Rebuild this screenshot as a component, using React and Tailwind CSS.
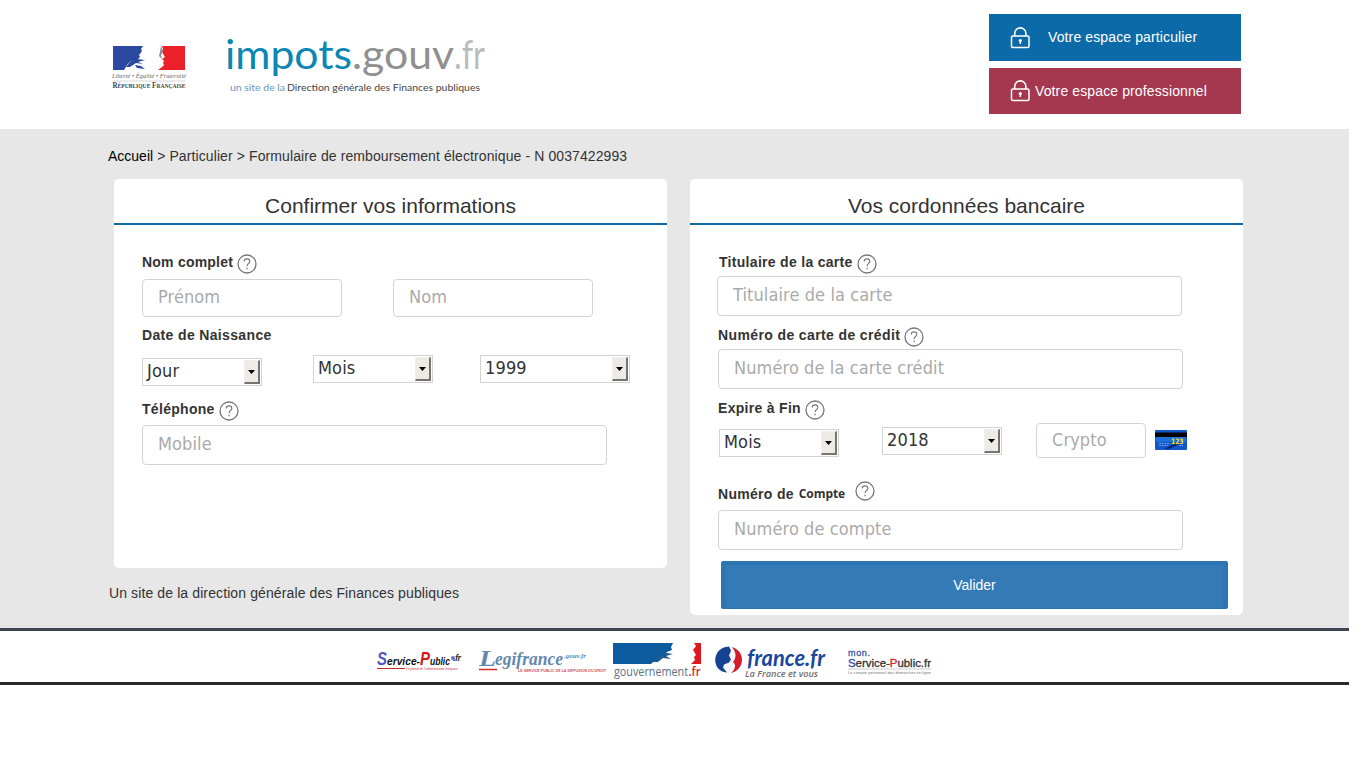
import React from "react";

function Help({ className = "" }) {
  return (
    <svg className={"h-5 w-5 shrink-0 " + className} viewBox="0 0 20 20" fill="none" stroke="#777">
      <circle cx="10" cy="10" r="9" strokeWidth="1.3" />
      <path d="M7.200 7.600C7.200 5.700 8.400 4.900 10 4.900s2.800 1 2.800 2.500c0 2.200-2.700 2.100-2.700 4.800" strokeWidth="1.100" />
      <path d="M10.100 13.700v1.500" strokeWidth="1.300" />
    </svg>
  );
}

function Label({ children, className = "" }) {
  return (
    <span className={"whitespace-nowrap leading-4 font-bold text-[#333] " + className}>
      {children}
    </span>
  );
}

function Field({ children, className = "" }) {
  return (
    <div
      className={
        "flex shrink-0 items-center rounded-[4px] border border-[#d3d3d3] bg-white pb-[3px] pl-[15px] font-['DejaVu_Sans_Condensed','DejaVu_Sans',sans-serif] text-[18px] tracking-[0.1px] text-[#aaa] " +
        className
      }
    >
      <span className="whitespace-nowrap">{children}</span>
    </div>
  );
}

function Picker({ children, className = "" }) {
  return (
    <div
      className={
        "flex h-7 shrink-0 items-center justify-between border border-[#d3d3d3] bg-white pr-px pl-1 font-['DejaVu_Sans_Condensed','DejaVu_Sans',sans-serif] text-[18px] tracking-[0.15px] text-[#333] " +
        className
      }
    >
      <span className="pb-0.5 leading-6">{children}</span>
      <span className="flex h-6 w-4 items-center justify-center border-t border-r-2 border-b-2 border-l border-t-[#f1efeb] border-r-[#77746f] border-b-[#77746f] border-l-[#f1efeb] bg-[#eeebe6]">
        <svg className="h-1 w-[7px]" viewBox="0 0 7 4">
          <path d="M0 0h7L3.500 4z" fill="#000" />
        </svg>
      </span>
    </div>
  );
}

function Lock() {
  return (
    <svg className="h-[22px] w-5" viewBox="0 0 20 22" fill="none" stroke="#fff">
      <rect x="1.500" y="9" width="17.500" height="11.500" rx="1.300" strokeWidth="1.500" />
      <path d="M4.700 9V6.500a5.600 5.600 0 0 1 11.200 0V9" strokeWidth="1.600" />
      <circle cx="10.300" cy="13.500" r="1.600" fill="#fff" stroke="none" />
      <path d="M10.300 14v3" strokeWidth="1.500" />
    </svg>
  );
}

function Republic() {
  return (
    <svg className="h-[46px] w-[76px]" viewBox="0 0 76 46">
      <path d="M2 1h72v24H2z" fill="#fff" />
      <path d="M2 1h30l-2 3 1 2-3 4 1 2-3 3-6 1-4 4-3 5H2z" fill="#2b4a9f" />
      <path d="M51 1h23v24H47l4-3 2-2-1-2 1-2-2-2 3-2-3-5 1-3z" fill="#ec2029" />
      <path d="M15 22l5-6 6-2 8 1-7 2 5 2-7-1-6 4zM24 20l6 1 4 3-8-1z" fill="#2b4a9f" />
      <path d="M50 1l2 5-2 4 1 4-3-3 1-4z" fill="#8a8a8a" />
      <text x="1" y="33" textLength="74" lengthAdjust="spacingAndGlyphs" fontFamily="Liberation Serif, serif" fontStyle="italic" fontSize="6.500" fill="#666">Liberté • Égalité • Fraternité</text>
      <path d="M2 36h72" stroke="#aaa" strokeWidth=".5" />
      <text x="1.500" y="43" textLength="73" lengthAdjust="spacingAndGlyphs" fontFamily="Liberation Serif, serif" fontWeight="bold" fontSize="7.500" fill="#444">
        R<tspan fontSize="6">ÉPUBLIQUE</tspan> F<tspan fontSize="6">RANÇAISE</tspan>
      </text>
    </svg>
  );
}

function Wordmark() {
  return (
    <svg className="h-[70px] w-[264px] overflow-visible" viewBox="0 0 264 70" fontFamily="Lato, sans-serif">
      <g fontSize="41">
        <text x="-1" y="42" textLength="127" lengthAdjust="spacingAndGlyphs" fill="#0a87b3">impots</text>
        <text x="126" y="42" textLength="102" lengthAdjust="spacingAndGlyphs" fill="#909090">.gouv</text>
        <text x="228" y="42" textLength="31" lengthAdjust="spacingAndGlyphs" fill="#bcbcbc">.fr</text>
      </g>
      <text x="4" y="64" textLength="55" lengthAdjust="spacingAndGlyphs" fontSize="10" fill="#6799bd">un site de la</text>
      <text x="61" y="64" textLength="193" lengthAdjust="spacingAndGlyphs" fontSize="10" fill="#454545">Direction générale des Finances publiques</text>
    </svg>
  );
}

function BankCard() {
  return (
    <svg className="h-5 w-8" viewBox="0 0 32 20">
      <rect width="32" height="20" rx="1" fill="#1257c8" />
      <path d="M1 7h30v5H1z" fill="#1b70da" />
      <path d="M0 2.500h32v4.500H0z" fill="#000" />
      <path d="M9 19l10-5 4-1 1 1-10 5z" fill="#08256f" />
      <path d="M4 13.500h11M4 15.500h9M24 15.500h4" stroke="#6c9be4" strokeDasharray="2 .6" />
      <text x="16" y="13.500" textLength="12.500" lengthAdjust="spacingAndGlyphs" fontFamily="DejaVu Sans, sans-serif" fontSize="7.500" fontWeight="bold" fill="#f0e010">123</text>
    </svg>
  );
}

function Partners() {
  return (
    <svg className="h-[51px] w-[580px]" viewBox="0 0 580 51" fontFamily="Liberation Sans, sans-serif">
      <g fontWeight="bold" fontStyle="italic">
        <text x="7" y="34" fontSize="18" textLength="10" lengthAdjust="spacingAndGlyphs" fill="#5358c4">S</text>
        <text x="17" y="34" fontSize="11.500" textLength="33" lengthAdjust="spacingAndGlyphs" fill="#111">ervice-</text>
        <text x="50" y="34" fontSize="18" textLength="10" lengthAdjust="spacingAndGlyphs" fill="#d8151d">P</text>
        <text x="60" y="34" fontSize="11.500" textLength="20" lengthAdjust="spacingAndGlyphs" fill="#111">ublic</text>
        <circle cx="83" cy="27" r="2" fill="#6874b7" />
        <text x="83" y="30" fontSize="9" textLength="8" fill="#333">.fr</text>
      </g>
      <path d="M7 37.500h28" stroke="#c8282d" />
      <text x="36" y="39" fontSize="4" textLength="52" lengthAdjust="spacingAndGlyphs" fontStyle="italic" fill="#c8282d">Le portail de l'administration française</text>

      <g fontFamily="Liberation Serif, serif" fontStyle="italic" fontWeight="bold" fill="#6389ae">
        <text x="109" y="35" fontSize="24" textLength="17" lengthAdjust="spacingAndGlyphs">L</text>
        <text x="125" y="34" fontSize="19" textLength="68" lengthAdjust="spacingAndGlyphs">egifrance</text>
        <text x="194" y="27" fontSize="7" textLength="22" lengthAdjust="spacingAndGlyphs">.gouv.fr</text>
      </g>
      <path d="M109 38.500h18" stroke="#d42b2b" strokeWidth="1.500" />
      <text x="148" y="41" fontSize="3.800" fontWeight="bold" textLength="88" lengthAdjust="spacingAndGlyphs" fill="#ce5260">LE SERVICE PUBLIC DE LA DIFFUSION DU DROIT</text>

      <path d="M243 12h87v21h-87z" fill="#0b5b9e" />
      <path d="M303 12h27v21h-49l5-5 7-2 4-5 5-2-1-3z" fill="#fff" />
      <path d="M324 12h7v21h-10l4-4-1-3 2-2-3-5 3-4z" fill="#df1820" />
      <path d="M282 31l7-7 8-2 6 1-7 2 5 3-8-1-5 4z" fill="#1b5b92" />
      <text x="244" y="45" fontFamily="Open Sans, sans-serif" fontSize="13" textLength="74" lengthAdjust="spacingAndGlyphs" fill="#597085">gouvernement</text>
      <text x="318.500" y="45" fontFamily="Open Sans, sans-serif" fontSize="13" fontWeight="600" textLength="12" lengthAdjust="spacingAndGlyphs" fill="#d51c25">.fr</text>

      <ellipse cx="358.500" cy="29" rx="13.500" ry="13" fill="#f3f5fa" />
      <path d="M359 15.500c-18 1-18 25-2 26l-4-5 1-3 5-2 2-3-2-4 2-5z" fill="#164294" />
      <path d="M362 16c14 4 13 23-1 26 5-4 5-9 2-11 4-5 3-10-1-15z" fill="#d41c29" />
      <g fontStyle="italic">
        <text x="377" y="35" fontFamily="Lato, sans-serif" fontSize="23" fontWeight="bold" textLength="78" lengthAdjust="spacingAndGlyphs" fill="#19489b">france.fr</text>
        <text x="375" y="46" fontFamily="Open Sans, sans-serif" fontSize="9" fontWeight="600" textLength="73" lengthAdjust="spacingAndGlyphs" fill="#707070">La France et vous</text>
      </g>

      <g strokeWidth=".3">
        <text x="478" y="25" fontSize="9" textLength="22" fill="#4058a8" stroke="#4058a8">mon.</text>
        <text x="478" y="35.500" fontSize="10.500" textLength="83" lengthAdjust="spacingAndGlyphs" fill="#333" stroke="#333">
          <tspan fill="#2445ad" stroke="#2445ad">S</tspan>ervice-<tspan fill="#dc2028" stroke="#dc2028">P</tspan>ublic.fr
        </text>
      </g>
      <path d="M478 38h83" stroke="#aaa" strokeWidth=".6" />
      <text x="478" y="43" fontSize="4" textLength="83" lengthAdjust="spacingAndGlyphs" fill="#777">Le compte personnel des démarches en ligne</text>
    </svg>
  );
}

function Panel({ title, className, children }) {
  return (
    <section className={"w-[553px] rounded-[5px] bg-white " + className}>
      <h2 className="h-[46px] border-b-2 border-[#0d6aa8] pt-[13px] text-center text-[21px] leading-7 text-[#333]">
        {title}
      </h2>
      {children}
    </section>
  );
}

export default function App() {
  return (
    <div className="h-[768px] w-[1366px] overflow-hidden bg-white font-['Liberation_Sans',Arial,sans-serif] text-[14px] text-[#333]">
      <div className="w-[1349px]">
        <header className="flex h-[129px] items-start pl-[111px]">
          <div className="pt-[45px]"><Republic /></div>
          <div className="pt-[27px] pl-[39px]"><Wordmark /></div>
          <div className="mt-[14px] ml-[499px] flex w-[252px] flex-col gap-[7px] text-[14px] text-white">
            <div className="flex h-[47px] items-center bg-[#0d6aa8] pl-[21px]">
              <Lock /><span className="ml-[18px] tracking-[0.12px]">Votre espace particulier</span>
            </div>
            <div className="flex h-[46px] items-center bg-[#a5384f] pl-[21px]">
              <Lock /><span className="ml-[5px] tracking-[0.12px]">Votre espace professionnel</span>
            </div>
          </div>
        </header>

        <main className="h-[499px] bg-[#e7e7e7]">
          <p className="h-[50px] pt-[19px] pl-[108px] leading-4 tracking-[0.1px]">
            <span className="tracking-normal text-black">Accueil</span> &gt; Particulier &gt; Formulaire de remboursement électronique - N 0037422993
          </p>
          <div className="flex items-start gap-[23px] pl-[114px]">
            <div className="w-[553px]">
              <Panel title="Confirmer vos informations" className="h-[389px]">
                <div className="px-7 pt-7">
                  <div className="flex h-[26px] items-start gap-1">
                    <Label className="pt-px tracking-[0.22px]">Nom complet</Label><Help className="mt-px" />
                  </div>
                  <div className="flex gap-[51px]">
                    <Field className="h-[38px] w-[200px]">Prénom</Field>
                    <Field className="h-[38px] w-[200px]">Nom</Field>
                  </div>
                  <div className="flex h-[38px] items-center pb-0.5">
                    <Label className="tracking-[0.35px]">Date de Naissance</Label>
                  </div>
                  <div className="flex h-[31px] items-start">
                    <Picker className="mt-[3px] w-[120px]">Jour</Picker>
                    <Picker className="ml-[51px] w-[120px]">Mois</Picker>
                    <Picker className="ml-[47px] w-[150px]">1999</Picker>
                  </div>
                  <div className="flex h-[39px] items-start gap-1 pt-[15px]">
                    <Label className="tracking-[0.3px]">Téléphone</Label><Help />
                  </div>
                  <Field className="h-10 w-[465px]">Mobile</Field>
                </div>
              </Panel>
              <p className="pt-[17px] leading-4 tracking-[0.11px]"><span className="-ml-[5px]">Un site de la direction générale des Finances publiques</span></p>
            </div>

            <Panel title="Vos cordonnées bancaire" className="h-[436px]">
              <div className="pt-7 pl-7">
                <div className="flex h-[23px] items-start gap-1">
                  <Label className="pt-px pl-px tracking-[0.3px]">Titulaire de la carte</Label><Help className="mt-px" />
                </div>
                <Field className="-ml-px h-10 w-[465px]">Titulaire de la carte</Field>
                <div className="flex h-[33px] items-start gap-1 pt-[11px]">
                  <Label className="tracking-[0.38px]">Numéro de carte de crédit</Label><Help />
                </div>
                <Field className="h-10 w-[465px]">Numéro de la carte crédit</Field>
                <div className="flex h-[34px] items-start gap-1 pt-[11px]">
                  <Label className="tracking-[0.3px]">Expire à Fin</Label><Help />
                </div>
                <div className="flex h-[58px] items-start">
                  <Picker className="mt-1.5 ml-px w-[120px]">Mois</Picker>
                  <Picker className="mt-1 ml-[43px] w-[120px]">2018</Picker>
                  <Field className="ml-[34px] h-[35px] w-[110px]">Crypto</Field>
                  <div className="mt-[7px] ml-[9px]"><BankCard /></div>
                </div>
                <div className="flex h-[29px] items-start">
                  <Label className="pt-[5px] tracking-[0.3px]">Numéro de</Label>
                  <Label className="ml-[5px] pt-[5px] font-['Open_Sans',sans-serif] text-[12px] tracking-[-0.1px]">Compte</Label>
                  <Help className="ml-2.5" />
                </div>
                <Field className="h-10 w-[465px]">Numéro de compte</Field>
                <div className="mt-[11px] ml-[3px] flex h-12 w-[507px] items-center justify-center rounded-[2px] border-x-[5px] border-t-4 border-b border-x-[#2c74b2] border-y-[#2c74b2] bg-[#337ab7] pb-0.5 text-white">
                  Valider
                </div>
              </div>
            </Panel>
          </div>
        </main>

        <footer className="h-[57px] border-t-[3px] border-b-[3px] border-t-[#3d4351] border-b-[#29292b] pl-[370px]">
          <Partners />
        </footer>
      </div>
    </div>
  );
}
